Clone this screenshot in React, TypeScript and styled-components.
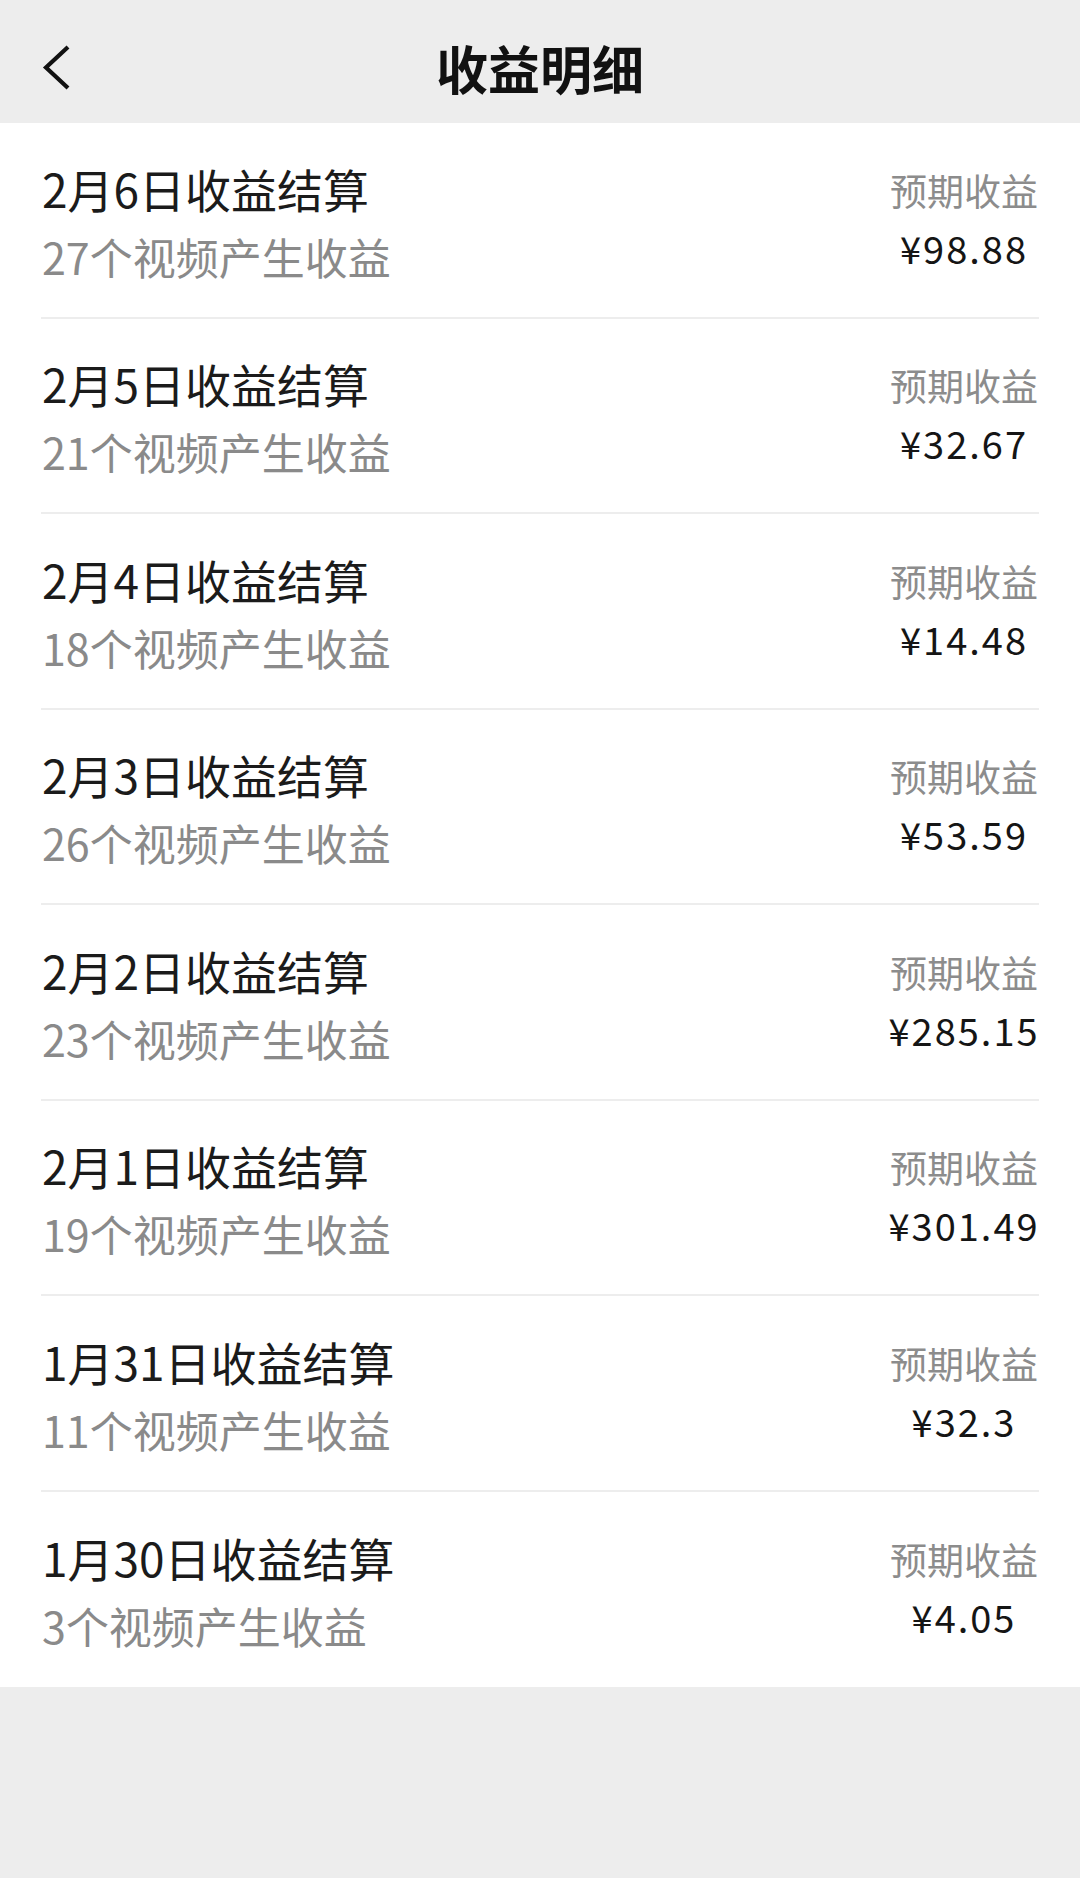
import styled, { createGlobalStyle } from "styled-components";

const GlobalStyle = createGlobalStyle`
  html, body {
    margin: 0;
    padding: 0;
    background: #ededed;
  }
  body {
    font-family: "Noto Sans CJK SC", "Noto Sans", sans-serif;
    -webkit-font-smoothing: antialiased;
  }
`;

const Page = styled.div`
  width: 1080px;
  min-height: 1878px;
  background: #ededed;
`;

const Header = styled.header`
  display: grid;
  grid-template-columns: 1fr auto 1fr;
  align-items: center;
  height: 123px;
  padding-top: 12px;
  box-sizing: border-box;
  background: #ededed;
  h1 {
    margin: 0;
    font-size: 52px;
    font-weight: 700;
    line-height: 1;
    color: #111;
  }
`;

const BackButton = styled.button`
  justify-self: start;
  display: flex;
  align-items: center;
  border: none;
  background: transparent;
  padding: 0 0 0 40px;
  cursor: pointer;
`;

const List = styled.ul`
  margin: 0;
  padding: 0 41px;
  list-style: none;
  background: #fff;
`;

const Row = styled.li<{ $last?: boolean }>`
  display: flex;
  justify-content: space-between;
  align-items: center;
  height: 195.5px;
  box-sizing: border-box;
  border-bottom: ${(p) => (p.$last ? "none" : "2px solid #ededed")};
`;

const Info = styled.div`
  display: flex;
  flex-direction: column;
  padding-left: 1px;
  margin-top: 4px;
  .title {
    font-size: 46px;
    line-height: 68px;
    color: #1b1b1b;
  }
  .sub {
    font-size: 43px;
    line-height: 68px;
    color: #8a8a8a;
  }
`;

const Earn = styled.div`
  display: flex;
  flex-direction: column;
  align-items: center;
  width: 150px;
  margin-top: -2px;
  .label {
    font-size: 37px;
    line-height: 58px;
    color: #8c8c8c;
  }
  .amount {
    font-size: 38px;
    line-height: 58px;
    font-weight: 400;
    letter-spacing: 2px;
    color: #151515;
  }
`;

const records = [
  { date: "2月6日", count: 27, amount: "98.88" },
  { date: "2月5日", count: 21, amount: "32.67" },
  { date: "2月4日", count: 18, amount: "14.48" },
  { date: "2月3日", count: 26, amount: "53.59" },
  { date: "2月2日", count: 23, amount: "285.15" },
  { date: "2月1日", count: 19, amount: "301.49" },
  { date: "1月31日", count: 11, amount: "32.3" },
  { date: "1月30日", count: 3, amount: "4.05" },
];

const App = () => {
  return (
    <Page>
      <GlobalStyle />
      <Header>
        <BackButton aria-label="返回">
          <svg width="32" height="48" viewBox="0 0 32 48">
            <path d="M28 3 L6 23.5 L28 44" fill="none" stroke="#111" strokeWidth="4.2" />
          </svg>
        </BackButton>
        <h1>收益明细</h1>
        <div />
      </Header>
      <List>
        {records.map((r, i) => (
          <Row key={r.date} $last={i === records.length - 1}>
            <Info>
              <span className="title">{r.date}收益结算</span>
              <span className="sub">{r.count}个视频产生收益</span>
            </Info>
            <Earn>
              <span className="label">预期收益</span>
              <span className="amount">¥{r.amount}</span>
            </Earn>
          </Row>
        ))}
      </List>
    </Page>
  );
};

export default App;
